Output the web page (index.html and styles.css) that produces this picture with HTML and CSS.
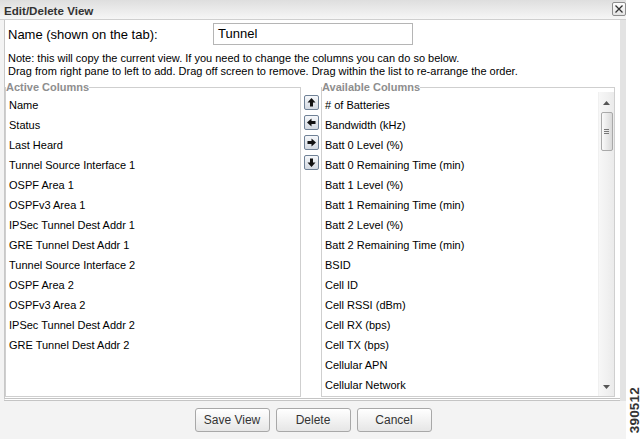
FILE: index.html
```html
<!DOCTYPE html>
<html>
<head>
<meta charset="utf-8">
<link rel="stylesheet" href="styles.css">
</head>
<body>
<div class="page">
  <div class="titlebar">
    <span class="title">Edit/Delete View</span>
    <span class="close"><svg width="12" height="12" viewBox="0 0 12 12"><path d="M2.5 2.5 L9.5 9.5 M9.5 2.5 L2.5 9.5" stroke="#333" stroke-width="1.3" fill="none"/></svg></span>
  </div>
  <div class="main">
    <div class="dialog">
      <div class="content-row">
        <div class="panel">
          <div class="name-row">
            <span class="name-label">Name (shown on the tab):</span>
            <span class="name-input">Tunnel</span>
          </div>
          <div class="note">Note: this will copy the current view. If you need to change the columns you can do so below.<br>Drag from right pane to left to add. Drag off screen to remove. Drag within the list to re-arrange the order.</div>
          <div class="columns">
            <fieldset class="box left-box">
              <legend>Active Columns</legend>
              <ul class="list">
                <li>Name</li>
                <li>Status</li>
                <li>Last Heard</li>
                <li>Tunnel Source Interface 1</li>
                <li>OSPF Area 1</li>
                <li>OSPFv3 Area 1</li>
                <li>IPSec Tunnel Dest Addr 1</li>
                <li>GRE Tunnel Dest Addr 1</li>
                <li>Tunnel Source Interface 2</li>
                <li>OSPF Area 2</li>
                <li>OSPFv3 Area 2</li>
                <li>IPSec Tunnel Dest Addr 2</li>
                <li>GRE Tunnel Dest Addr 2</li>
              </ul>
            </fieldset>
            <div class="movers">
              <span class="mv"><svg width="13" height="13" viewBox="0 0 13 13"><path d="M6.5 2 L10.5 6.5 L8 6.5 L8 10.5 L5 10.5 L5 6.5 L2.5 6.5 Z" fill="#111"/></svg></span>
              <span class="mv"><svg width="13" height="13" viewBox="0 0 13 13"><path d="M2 6.5 L6.5 2.5 L6.5 5 L10.5 5 L10.5 8 L6.5 8 L6.5 10.5 Z" fill="#111"/></svg></span>
              <span class="mv"><svg width="13" height="13" viewBox="0 0 13 13"><path d="M11 6.5 L6.5 2.5 L6.5 5 L2.5 5 L2.5 8 L6.5 8 L6.5 10.5 Z" fill="#111"/></svg></span>
              <span class="mv"><svg width="13" height="13" viewBox="0 0 13 13"><path d="M6.5 11 L10.5 6.5 L8 6.5 L8 2.5 L5 2.5 L5 6.5 L2.5 6.5 Z" fill="#111"/></svg></span>
            </div>
            <fieldset class="box right-box">
              <legend>Available Columns</legend>
              <div class="scroll-wrap">
                <ul class="list">
                  <li># of Batteries</li>
                  <li>Bandwidth (kHz)</li>
                  <li>Batt 0 Level (%)</li>
                  <li>Batt 0 Remaining Time (min)</li>
                  <li>Batt 1 Level (%)</li>
                  <li>Batt 1 Remaining Time (min)</li>
                  <li>Batt 2 Level (%)</li>
                  <li>Batt 2 Remaining Time (min)</li>
                  <li>BSID</li>
                  <li>Cell ID</li>
                  <li>Cell RSSI (dBm)</li>
                  <li>Cell RX (bps)</li>
                  <li>Cell TX (bps)</li>
                  <li>Cellular APN</li>
                  <li>Cellular Network</li>
                </ul>
                <div class="vscroll">
                  <span class="sb-arrow"><svg width="7" height="4" viewBox="0 0 7 4"><path d="M0 4 L3.5 0 L7 4 Z" fill="#555"/></svg></span>
                  <span class="thumb"><span class="grip"></span><span class="grip"></span><span class="grip"></span></span>
                  <span class="sb-fill"></span>
                  <span class="sb-arrow"><svg width="7" height="4" viewBox="0 0 7 4"><path d="M0 0 L3.5 4 L7 0 Z" fill="#555"/></svg></span>
                </div>
              </div>
            </fieldset>
          </div>
        </div>
        <div class="strip"></div>
      </div>
      <div class="footer">
        <span class="btn">Save View</span>
        <span class="btn">Delete</span>
        <span class="btn">Cancel</span>
      </div>
    </div>
    <div class="side"><span class="fig">390512</span></div>
  </div>
</div>
</body>
</html>
```

FILE: styles.css
```css
html, body {
  margin: 0;
  padding: 0;
  background: #fff;
}
.page {
  width: 642px;
  height: 439px;
  display: flex;
  flex-direction: column;
  overflow: hidden;
  font-family: "Liberation Sans", Arial, sans-serif;
}
.titlebar {
  height: 20px;
  flex: none;
  box-sizing: border-box;
  display: flex;
  align-items: center;
  padding-left: 4px;
  background: linear-gradient(#dedede, #f6f6f6);
  border-bottom: 1px solid #cfcfcf;
  width: 626px;
}
.title {
  font-weight: bold;
  font-size: 11.6px;
  color: #333;
  flex: 1;
  margin-top: 1px;
}
.close {
  width: 12px;
  height: 12px;
  border: 1px solid #8d8d8d;
  border-radius: 2px;
  background: linear-gradient(#fdfdfd, #e4e4e4);
  display: flex;
  margin-top: -2px;
}
.main {
  flex: 1;
  display: flex;
}
.dialog {
  width: 626px;
  display: flex;
  flex-direction: column;
  background: #f3f3f3;
}
.content-row {
  display: flex;
  padding-left: 4px;
  height: 381px;
}
.panel {
  width: 615px;
  background: #fff;
  border-left: 1px solid #c8c8c8;
  border-bottom: 3px double #c4c4c4;
  display: flex;
  flex-direction: column;
}
.strip {
  width: 6px;
  background: #e3e3e3;
}
.name-row {
  display: flex;
  align-items: center;
  height: 24px;
  margin-top: 2px;
  padding-left: 3px;
}
.name-label {
  font-size: 13px;
  color: #000;
  width: 205px;
}
.name-input {
  width: 194px;
  height: 20px;
  border: 1px solid #b5b5b5;
  font-size: 13px;
  line-height: 20px;
  padding-left: 4px;
  color: #000;
}
.note {
  font-size: 11px;
  line-height: 13px;
  color: #000;
  padding-left: 3px;
  margin-top: 6px;
}
.columns {
  display: flex;
  flex: 1;
  margin-top: 4px;
  min-height: 0;
}
.box {
  margin: 0;
  padding: 0;
  border: 1px solid #cfcfcf;
  min-width: 0;
  overflow: hidden;
}
.box legend {
  font-size: 11px;
  font-weight: bold;
  color: #8e8e8e;
  padding: 0;
  margin-left: 0;
  line-height: 10px;
  height: 10px;
}
.left-box {
  width: 294px;
  margin-bottom: 1px;
}
.right-box {
  width: 292px;
  margin-bottom: 1px;
}
.list {
  list-style: none;
  margin: 0;
  padding: 3px 0 0 3px;
  font-size: 11px;
  line-height: 20px;
  color: #000;
}
.list li {
  white-space: nowrap;
}
.movers {
  width: 20px;
  display: flex;
  flex-direction: column;
  align-items: center;
  gap: 5px;
  padding-top: 13px;
}
.mv {
  width: 13px;
  height: 13px;
  border: 1px solid #6f8196;
  border-radius: 2px;
  background: linear-gradient(#f6f8fb, #d3d9e1);
  display: flex;
}
.scroll-wrap {
  display: flex;
  height: 100%;
}
.scroll-wrap .list {
  flex: 1;
}
.vscroll {
  width: 15px;
  display: flex;
  flex-direction: column;
  align-items: center;
  background: linear-gradient(90deg, #f7f7f7, #ebebeb);
  border-left: 1px solid #f0f0f0;
  padding: 5px 0 3px;
}
.sb-arrow {
  height: 12px;
  display: flex;
  align-items: center;
  justify-content: center;
}
.thumb {
  width: 12px;
  height: 39px;
  margin-top: 3px;
  box-sizing: border-box;
  border: 1px solid #a9a9a9;
  border-radius: 2px;
  background: linear-gradient(90deg, #fafafa, #d9d9d9);
  display: flex;
  flex-direction: column;
  align-items: center;
  justify-content: center;
  gap: 1px;
}
.grip {
  width: 5px;
  height: 1px;
  background: #777;
}
.sb-fill {
  flex: 1;
}
.footer {
  flex: 1;
  display: flex;
  justify-content: center;
  align-items: flex-start;
  gap: 6px;
  padding-top: 7px;
}
.btn {
  width: 73px;
  height: 22px;
  border: 1px solid #a8a8a8;
  border-radius: 3px;
  background: linear-gradient(#ffffff, #e6e6e6);
  font-size: 12px;
  line-height: 22px;
  text-align: center;
  color: #333;
}
.side {
  flex: 1;
  display: flex;
  align-items: flex-end;
  justify-content: center;
  padding-bottom: 6px;
}
.fig {
  writing-mode: vertical-rl;
  transform: rotate(180deg);
  font-size: 13.5px;
  font-weight: bold;
  color: #333;
  letter-spacing: 0.2px;
}
```
